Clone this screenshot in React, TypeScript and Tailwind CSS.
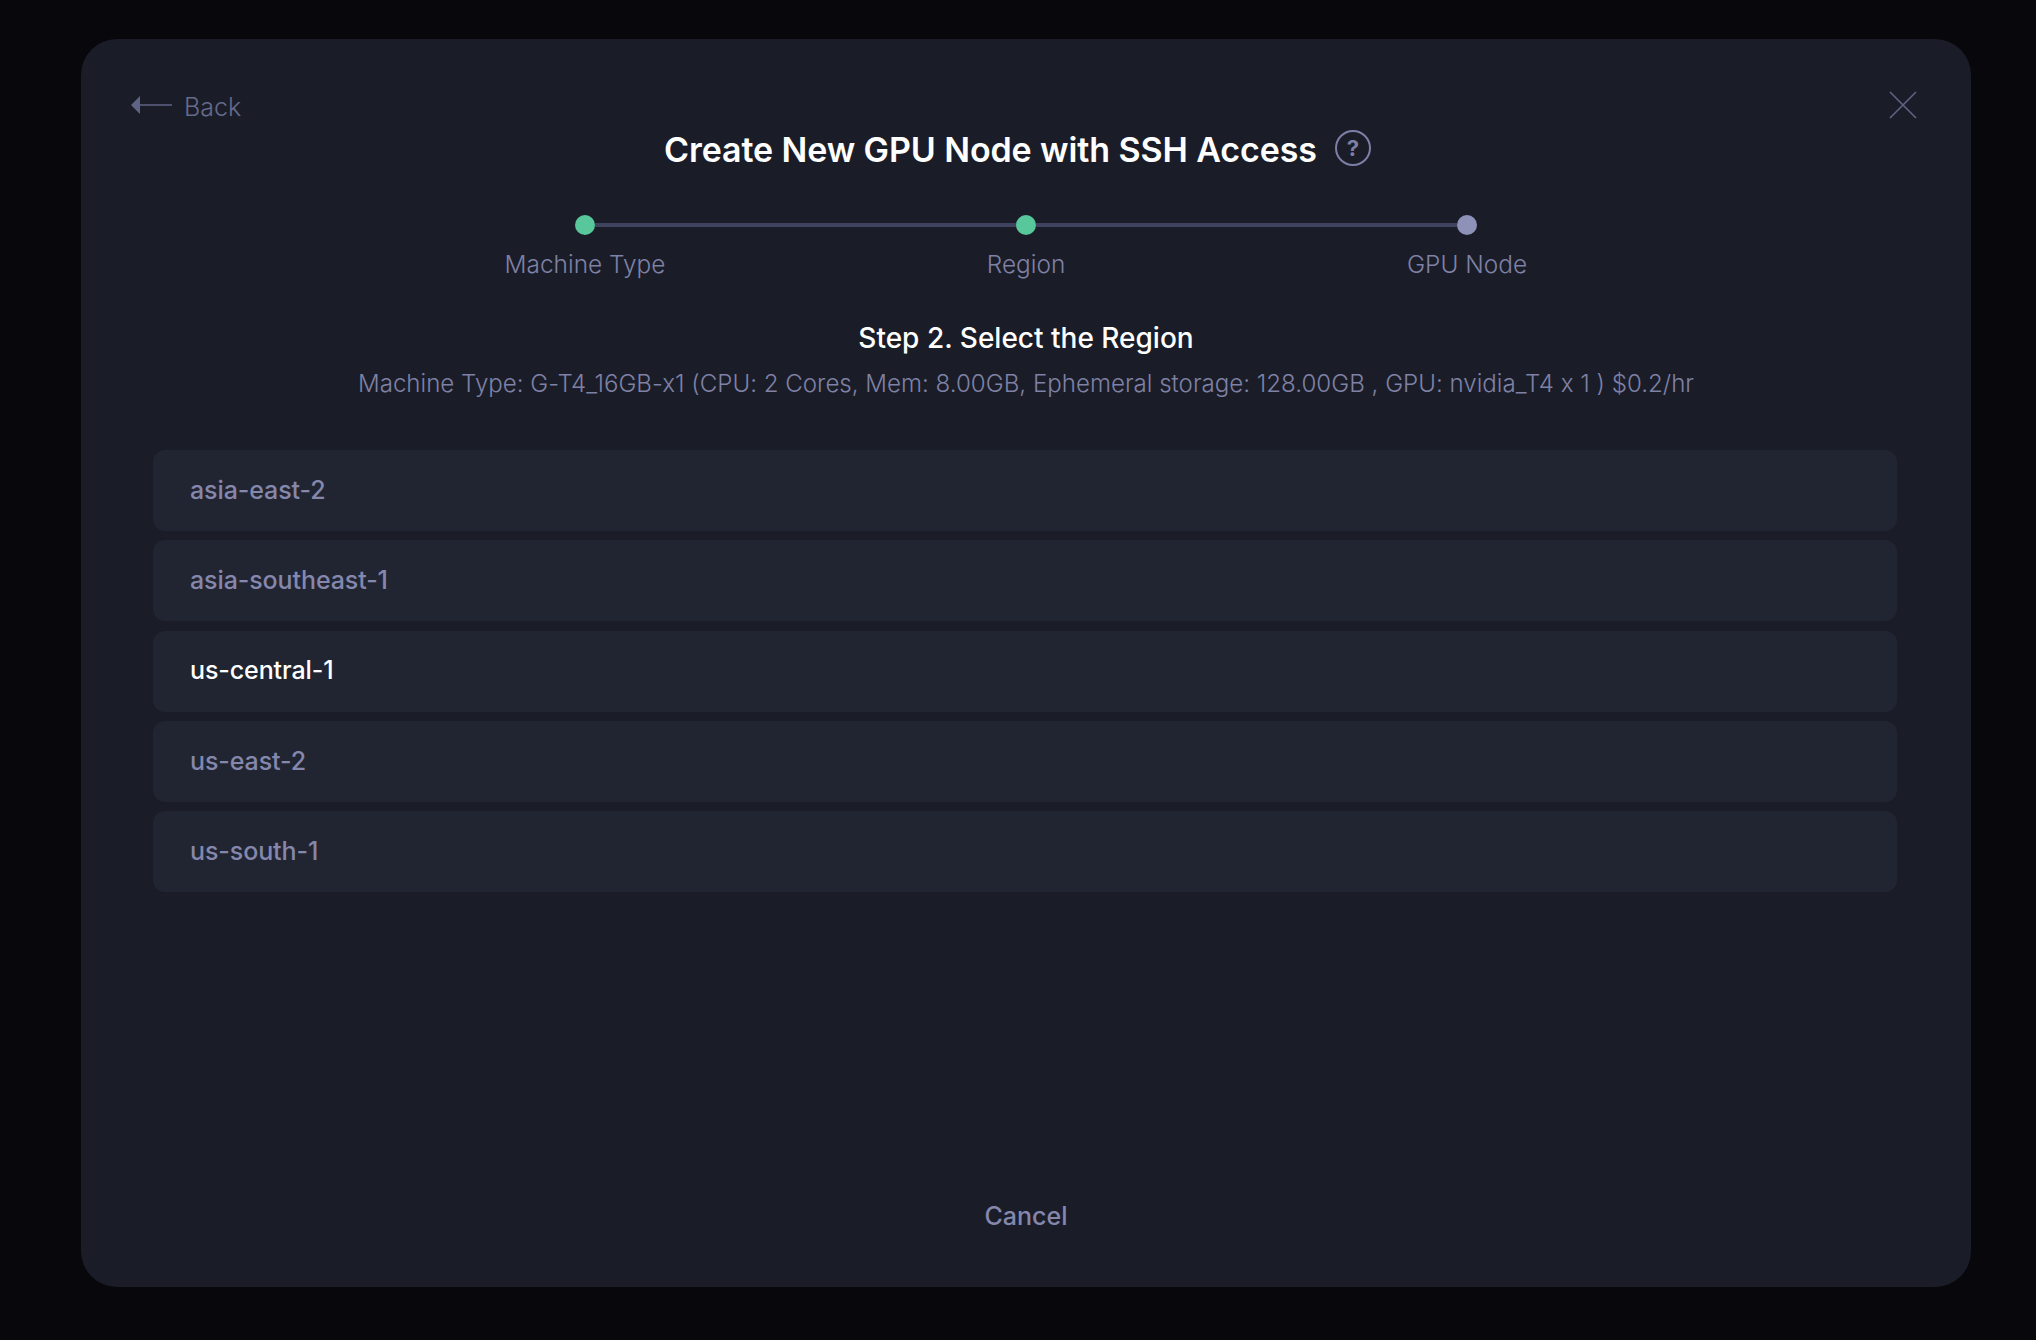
const regions = ['asia-east-2', 'asia-southeast-1', 'us-central-1', 'us-east-2', 'us-south-1']
const steps = ['Machine Type', 'Region', 'GPU Node']

export default function App() {
  return (
    <div className="h-[1340px] bg-[#07070c] pl-[81px] pr-[65px] pt-[39px] font-['Inter','Liberation_Sans',sans-serif]">
      <div className="relative flex h-[1248px] flex-col items-center rounded-[36px] bg-[#1a1d28] px-[72px]">
        <button type="button" className="absolute left-[50px] top-[52px] flex items-center gap-[11px] text-[25px] font-light leading-[32px] text-[#666a8c]">
          <svg width="42" height="18" viewBox="0 0 42 18" fill="#5f6384" className="mb-[4px]">
            <path d="M0 9 9 0v8.2h32v1.6H9V18z" />
          </svg>
          Back
        </button>
        <button type="button" className="absolute right-[53px] top-[51px]">
          <svg width="30" height="30" viewBox="0 0 30 30" stroke="#5f6384" strokeWidth="1.6" fill="none">
            <path d="M2 2l26 26M28 2 2 28" />
          </svg>
        </button>

        <div className="mt-[89px] flex items-center pr-[17px]">
          <h1 className="text-[34px] font-semibold leading-[44px] tracking-[-0.1px] text-white">Create New GPU Node with SSH Access</h1>
          <span className="ml-[18px] mt-[-5px] flex h-[36px] w-[36px] items-center justify-center rounded-full border-2 border-[#7d7fa5] text-[22px] font-bold leading-none text-[#7d7fa5]">?</span>
        </div>

        <div className="mt-[43px] flex w-[902px] items-center">
          <div className="h-[20px] w-[20px] rounded-full bg-[#58c79b]" />
          <div className="h-[4px] flex-1 bg-[#3f4360]" />
          <div className="h-[20px] w-[20px] rounded-full bg-[#58c79b]" />
          <div className="h-[4px] flex-1 bg-[#3f4360]" />
          <div className="h-[20px] w-[20px] rounded-full bg-[#8f92b8]" />
        </div>
        <div className="mt-[12px] grid w-[1323px] grid-cols-3">
          {steps.map((s) => (
            <div key={s} className="text-center text-[24.4px] font-light leading-[34px] text-[#7f81a5]">
              {s}
            </div>
          ))}
        </div>

        <h2 className="mt-[37px] text-[28px] font-medium leading-[40px] text-white">Step 2. Select the Region</h2>
        <p className="mt-[8px] text-[24.1px] font-light leading-[36px] text-[#7f81a5] [font-feature-settings:'calt'_0]">
          Machine Type: G-T4_16GB-x1 (CPU: 2 Cores, Mem: 8.00GB, Ephemeral storage: 128.00GB , GPU: nvidia_T4 x 1 ) $0.2/hr
        </p>

        <div className="mt-[48px] flex w-[1744px] flex-col gap-[9.25px] self-start">
          {regions.map((r) => (
            <div
              key={r}
              className={
                r === 'us-central-1'
                  ? 'flex h-[81px] items-center rounded-[12px] bg-[#212531] px-[37px] text-[25px] font-medium tracking-[-0.1px] text-white'
                  : 'flex h-[81px] items-center rounded-[12px] bg-[#212531] px-[37px] text-[25px] font-medium tracking-[-0.1px] text-[#8587ac]'
              }
            >
              {r}
            </div>
          ))}
        </div>

        <button type="button" className="mt-auto mb-[53px] text-[25px] font-medium leading-[36px] text-[#8587ac]">
          Cancel
        </button>
      </div>
    </div>
  )
}
